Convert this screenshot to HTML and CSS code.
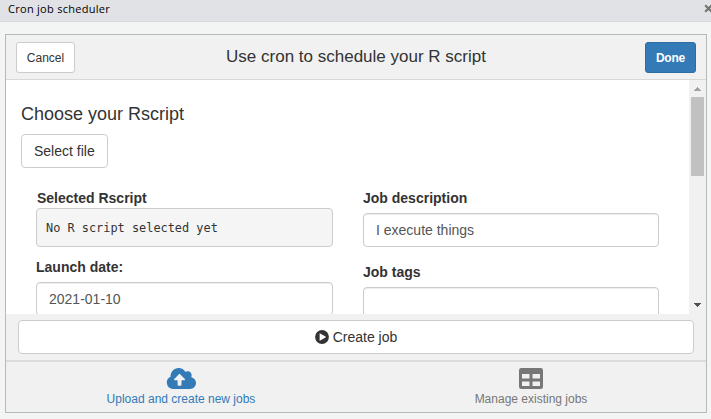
FILE: index.html
```
<!DOCTYPE html>
<html lang="en">
<head>
<meta charset="utf-8">
<title>Cron job scheduler</title>
<link rel="stylesheet" href="styles.css">
</head>
<body>
<div class="titlebar">
  <span class="caption">Cron job scheduler</span>
  <svg class="close" width="9" height="9" viewBox="0 0 9 9"><path d="M1.2 1.2 7.8 7.8M7.8 1.2 1.2 7.8" stroke="#737373" stroke-width="2.2"/></svg>
</div>
<main class="gadget">
  <header class="header">
    <button class="btn small">Cancel</button>
    <h1>Use cron to schedule your R script</h1>
    <button class="btn small primary">Done</button>
  </header>
  <section class="body">
    <div class="content">
      <h2>Choose your Rscript</h2>
      <button class="btn">Select file</button>
      <div class="columns">
        <div class="column">
          <label class="selected">Selected Rscript</label>
          <pre>No R script selected yet</pre>
          <label class="date">Launch date:</label>
          <div class="input">2021-01-10</div>
        </div>
        <div class="column">
          <label>Job description</label>
          <div class="input">I execute things</div>
          <label class="tags">Job tags</label>
          <div class="input"></div>
        </div>
      </div>
    </div>
    <div class="scrollbar">
      <svg width="17" height="17" viewBox="0 0 17 17" shape-rendering="crispEdges"><path d="M5 11h7L8.5 7z" fill="#a3a3a3"/></svg>
      <div class="thumb"></div>
      <svg class="down" width="17" height="17" viewBox="0 0 17 17" shape-rendering="crispEdges"><path d="M5 6h7L8.5 10z" fill="#505050"/></svg>
    </div>
  </section>
  <div class="create">
    <button class="btn">
      <svg width="14" height="14" viewBox="0 0 14 14"><circle cx="7" cy="7" r="6.9" fill="#333"/><path d="M4.6 3.7v6.6q0 .6.6.3L10.5 7.500q.6-.5 0-1L5.200 3.400q-.6-.3-.6.3z" fill="#fff"/></svg>
      <span>Create job</span>
    </button>
  </div>
  <nav class="tabs">
    <div class="tab active">
      <svg width="30" height="21" viewBox="0 0 30 21"><path d="M6.500 21A6.500 6.500 0 0 1 4.500 8.700C4.500 3.800 8 0 12.500 0c3 0 5.500 1.500 6.900 3.800 3-1.800 6.700.4 6.200 4.200-.1.500-.2.900-.4 1.300C28 9.900 30 12.200 30 15.100c0 3.300-2.700 5.900-6 5.900z" fill="#337ab7"/><path d="M13.700 5.800 19 11.200q.6.900-.6 1.100H15.500V17q0 .8-.8.800H12.400q-.8 0-.8-.8V12.300H8.700q-1.200-.2-.6-1.100l5-5.300q.3-.3.600-.1z" fill="#f1f1f1"/></svg>
      <span>Upload and create new jobs</span>
    </div>
    <div class="tab">
      <svg width="24" height="21" viewBox="0 0 24 21"><path fill-rule="evenodd" d="M2.300 0H21.700Q24 0 24 2.300V18.700Q24 21 21.700 21H2.300Q0 21 0 18.700V2.300Q0 0 2.300 0zM3 6v4.500h7.500V6zM13.500 6v4.500H21V6zM3 13.500V18h7.500V13.500zM13.500 13.500V18H21V13.500z" fill="#777"/></svg>
      <span>Manage existing jobs</span>
    </div>
  </nav>
</main>
</body>
</html>
```
FILE: styles.css
```
* { box-sizing: border-box; }
body {
  margin: 0;
  height: 419px;
  overflow: hidden;
  background: #f3f4f4;
  color: #333;
  font: 14px/20px "Liberation Sans", Arial, sans-serif;
}
.titlebar {
  display: flex;
  justify-content: space-between;
  width: 713px;
  height: 22px;
  padding-left: 8px;
  background: #e1e2e5;
  border-bottom: 1px solid #d6dadc;
}
.caption {
  color: #000;
  font: 11px/18px "Open Sans", sans-serif;
  letter-spacing: .28px;
}
.close { margin-top: 4px; }
.gadget {
  display: flex;
  flex-direction: column;
  width: 702px;
  height: 379px;
  margin: 12px 0 0 5px;
  border: 1px solid #b6b9b9;
  background: #f1f1f1;
}
.header {
  display: grid;
  grid-template-columns: 59px 1fr 51px;
  flex: none;
  height: 45px;
  padding: 7px 10px 0;
  border-bottom: 1px solid #d8d8d8;
}
h1, h2 { margin: 0; font-weight: 400; }
h1 {
  padding-right: 8px;
  font-size: 17px;
  line-height: 29px;
  text-align: center;
}
h2 { font-size: 18px; line-height: 20px; }
.btn {
  height: 34px;
  padding: 0 12px;
  border: 1px solid #ccc;
  border-radius: 4px;
  background: #fff;
  color: #333;
  font: inherit;
}
.btn.small {
  height: 31px;
  padding: 0;
  border-radius: 3px;
  font-size: 12px;
}
.btn.primary {
  border-color: #2e6da4;
  background: #337ab7;
  color: #fff;
  font-weight: 700;
  letter-spacing: -.2px;
}
.body {
  display: flex;
  flex: none;
  height: 234px;
  overflow: hidden;
  background: #fff;
}
.content { flex: 1; padding: 24px 15px 0; }
.content > .btn { display: block; margin-top: 10px; }
.columns {
  display: grid;
  grid-template-columns: 297px 296px;
  gap: 30px;
  margin: 20px 0 0 15px;
}
label { display: block; margin-bottom: 5px; font-weight: 700; }
label.selected { margin-bottom: 0; padding-left: 1px; }
label.tags { margin-top: 15px; }
pre {
  height: 39px;
  margin: 0 0 10px;
  padding: 9px;
  border: 1px solid #ccc;
  border-radius: 4px;
  background: #f5f5f5;
  font: 11.9px/20px "DejaVu Sans Mono", monospace;
}
.input {
  height: 34px;
  padding: 6px 12px;
  border: 1px solid #ccc;
  border-radius: 4px;
  box-shadow: inset 0 1px 1px rgba(0, 0, 0, .075);
  color: #555;
}
.scrollbar {
  display: flex;
  flex-direction: column;
  width: 17px;
  background: #f1f1f1;
}
.thumb { height: 79px; margin: 0 2px; background: #c1c1c1; }
.down { margin-top: auto; }
.create { flex: none; height: 46px; padding: 6px 12px 0; }
.create .btn {
  display: flex;
  align-items: center;
  justify-content: center;
  gap: 4px;
  width: 676px;
}
.tabs {
  display: flex;
  flex: 1;
  border-top: 2px solid #dcdcdc;
}
.tab {
  display: flex;
  flex: 1;
  flex-direction: column;
  align-items: center;
  padding-top: 6px;
  color: #777;
  font-size: 12px;
}
.active { color: #337ab7; }
```
